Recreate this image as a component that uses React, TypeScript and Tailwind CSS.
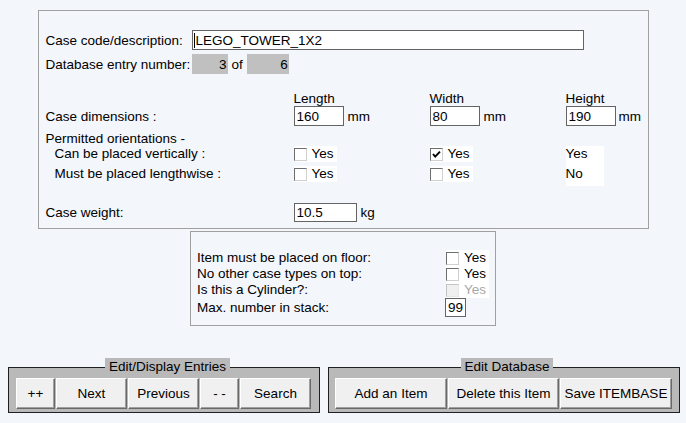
import React from "react";

function Check({ checked = false, disabled = false }: { checked?: boolean; disabled?: boolean }) {
  return (
    <span
      className={
        "relative flex h-[13px] w-[13px] shrink-0 items-center justify-center border " +
        (disabled
          ? "border-t-[#c4c4c4] border-l-[#c4c4c4] border-r-[#e6e6e6] border-b-[#e6e6e6] bg-[#f0f0f0]"
          : "border-t-[#6e6e6e] border-l-[#6e6e6e] border-r-[#d0d0d0] border-b-[#d0d0d0] bg-white")
      }
    >
      {checked && (
        <svg width="11" height="11" viewBox="0 0 11 11">
          <path d="M2 5 L4.2 7.6 L9 2.6" fill="none" stroke="#000" strokeWidth="1.9" />
        </svg>
      )}
    </span>
  );
}

function CheckYes({ checked = false, disabled = false }: { checked?: boolean; disabled?: boolean }) {
  return (
    <div className="flex h-[16px] w-[43px] items-center bg-white leading-[16px]">
      <Check checked={checked} disabled={disabled} />
      <span className={"ml-[5px] " + (disabled ? "text-[#a8a8a8]" : "text-black")}>Yes</span>
    </div>
  );
}

function Field({ value, w, h = 20 }: { value: string; w: string; h?: number }) {
  return (
    <div
      className={
        "flex items-center border border-[#646464] bg-white pl-[2px] leading-[15px] " +
        w +
        (h === 20 ? " h-[20px]" : " h-[19px]")
      }
    >
      {value}
    </div>
  );
}

function Btn({ label, w }: { label: string; w: string }) {
  return (
    <button
      className={
        "flex h-[31px] items-center justify-center border border-t-white border-l-white border-r-[#696969] border-b-[#696969] bg-[#f0f0f0] text-[13.5px] text-black shadow-[inset_-1px_-1px_0_#a0a0a0] " +
        w
      }
    >
      {label}
    </button>
  );
}

export default function App() {
  return (
    <div className="h-[423px] w-[686px] overflow-hidden bg-[#f3f6fb] pt-[10px] font-['Liberation_Sans',Arial,sans-serif] text-[13.5px] leading-[15px] text-black">
      {/* Main panel */}
      <div className="mx-auto h-[219px] w-[611px] border border-[#a0a0a0] pl-[7px] pt-[19px]">
        <div className="flex h-[20px] items-center">
          <div className="w-[146px]">Case code/description:</div>
          <div className="flex h-[20px] w-[392px] items-center border border-[#646464] bg-white pl-[1px]">
            <span className="mr-px h-[15px] w-px bg-black" />
            <span>LEGO_TOWER_1X2</span>
          </div>
        </div>
        <div className="mt-[4px] flex h-[20px] items-center">
          <div className="w-[146px]">Database entry number:</div>
          <div className="flex h-[20px] w-[36px] items-center justify-end bg-[#c0c0c0] pr-px">3</div>
          <span className="ml-[4px]">of</span>
          <div className="ml-[4px] flex h-[20px] w-[42px] items-center justify-end bg-[#c0c0c0] pr-px">6</div>
        </div>

        <div className="mt-[17px] flex h-[15px]">
          <div className="w-[248px]" />
          <div className="w-[136px]">Length</div>
          <div className="w-[136px]">Width</div>
          <div>Height</div>
        </div>
        <div className="flex h-[20px] items-center">
          <div className="w-[248px]">Case dimensions :</div>
          <div className="flex w-[136px] items-center">
            <Field value="160" w="w-[50px]" />
            <span className="ml-[4px]">mm</span>
          </div>
          <div className="flex w-[136px] items-center">
            <Field value="80" w="w-[50px]" />
            <span className="ml-[4px]">mm</span>
          </div>
          <div className="flex items-center">
            <Field value="190" w="w-[50px]" />
            <span className="ml-[3px]">mm</span>
          </div>
        </div>

        <div className="mt-[5px] h-[15px]">Permitted orientations -</div>
        <div className="flex">
          <div className="w-[248px] pl-[9px] leading-[16px]">
            <div className="h-[20px]">Can be placed vertically :</div>
            <div className="h-[20px]">Must be placed lengthwise :</div>
          </div>
          <div className="w-[136px]">
            <div className="h-[20px]">
              <CheckYes />
            </div>
            <div className="h-[20px]">
              <CheckYes />
            </div>
          </div>
          <div className="w-[136px]">
            <div className="h-[20px]">
              <CheckYes checked />
            </div>
            <div className="h-[20px]">
              <CheckYes />
            </div>
          </div>
          <div className="h-[40px] w-[38px] bg-white leading-[16px]">
            <div className="h-[20px]">Yes</div>
            <div className="h-[20px]">No</div>
          </div>
        </div>

        <div className="mt-[17px] flex h-[19px] items-center">
          <div className="w-[248px]">Case weight:</div>
          <Field value="10.5" w="w-[63px]" h={19} />
          <span className="ml-[4px]">kg</span>
        </div>
      </div>

      {/* Secondary panel */}
      <div className="mx-auto mt-[2px] h-[95px] w-[306px] border border-[#a0a0a0] pl-[6px] pt-[18px] leading-[16px]">
        <div className="flex h-[16px] items-center">
          <div className="w-[249px]">Item must be placed on floor:</div>
          <CheckYes />
        </div>
        <div className="flex h-[16px] items-center">
          <div className="w-[249px]">No other case types on top:</div>
          <CheckYes />
        </div>
        <div className="flex h-[16px] items-center">
          <div className="w-[249px]">Is this a Cylinder?:</div>
          <CheckYes disabled />
        </div>
        <div className="flex h-[19px] items-center">
          <div className="w-[248px]">Max. number in stack:</div>
          <Field value="99" w="w-[21px]" h={19} />
        </div>
      </div>

      {/* Bottom button groups */}
      <div className="mt-[32px] flex gap-[8px] pl-[8px]">
        <fieldset className="w-[312px] border border-[#202020] bg-[#b9b9b9] pb-[3px] pl-[7px] pt-[2px]">
          <legend className="mx-auto bg-[#b9b9b9] px-[4px] leading-[18px]">Edit/Display Entries</legend>
          <div className="flex gap-px">
            <Btn label="++" w="w-[39px]" />
            <Btn label="Next" w="w-[71px]" />
            <Btn label="Previous" w="w-[71px]" />
            <Btn label="- -" w="w-[39px]" />
            <Btn label="Search" w="w-[71px]" />
          </div>
        </fieldset>
        <fieldset className="w-[352px] border border-[#202020] bg-[#b9b9b9] pb-[3px] pl-[6px] pt-[2px]">
          <legend className="mx-auto bg-[#b9b9b9] px-[4px] leading-[18px]">Edit Database</legend>
          <div className="flex gap-px">
            <Btn label="Add an Item" w="w-[112px]" />
            <Btn label="Delete this Item" w="w-[111px]" />
            <Btn label="Save ITEMBASE" w="w-[112px]" />
          </div>
        </fieldset>
      </div>
    </div>
  );
}
